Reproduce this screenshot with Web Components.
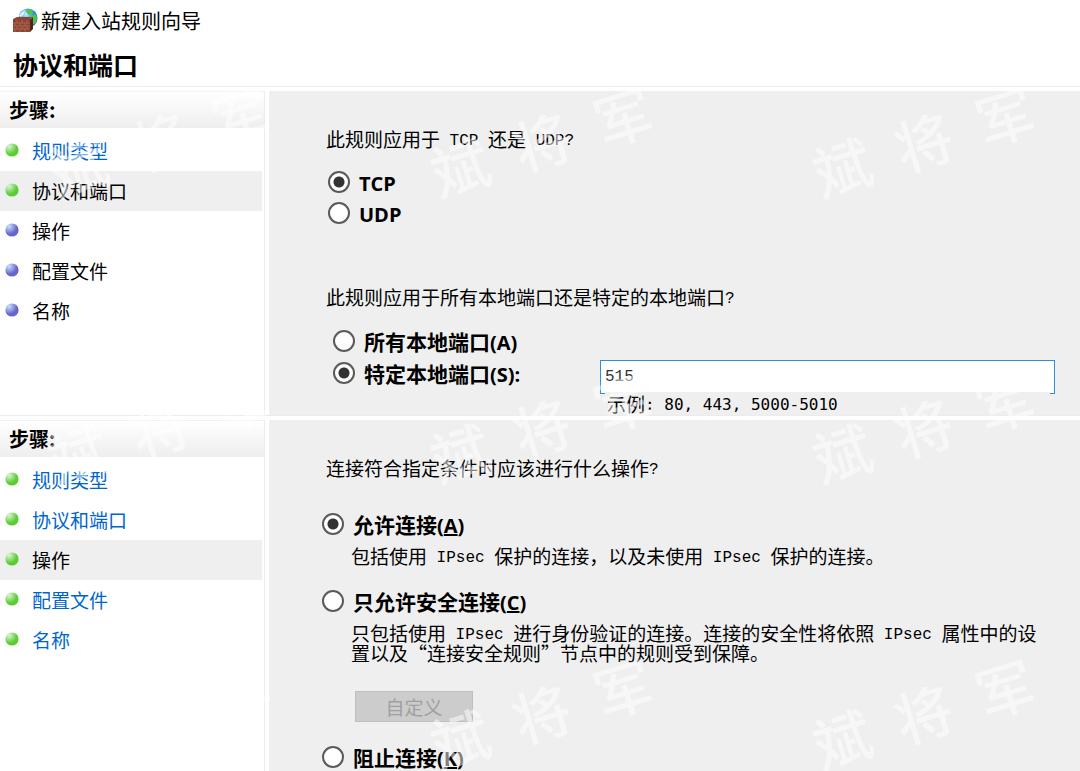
<!DOCTYPE html>
<html lang="zh-CN">
  <head>
    <meta charset="UTF-8" />
    <meta name="viewport" content="width=device-width, initial-scale=1" />
    <title>新建入站规则向导</title>
    <style>
      body {
        margin: 0;
        min-height: 100vh;
        display: flex;
        flex-direction: column;
        position: relative;
        overflow-x: hidden;
        background: #fff;
        color: #000;
        font: 19px/24px "Noto Sans CJK SC", sans-serif;
        --panel: #efefef;
        --link: #0066cc;
      }
      wizard-page:last-of-type {
        flex: 1;
      }
      p {
        margin: 0;
      }
      .protocols {
        gap: 3px;
        margin: 17px 0 58px 2px;
      }
      .ports {
        gap: 4px;
        margin: 18px 0 0 7px;
      }
      .actions {
        margin: 30px 0 0 -4px;
      }
    </style>
  </head>
  <body>
    <template id="tpl-header">
      <style>
        :host {
          display: block;
          padding: 7px 12px 4px;
        }
        .title {
          display: flex;
          align-items: center;
          gap: 2px;
          font-size: 20px;
          line-height: 28px;
        }
        svg {
          width: 27px;
          height: 26px;
        }
        h1 {
          margin: 12px 0 0 1px;
          font-size: 25px;
          line-height: 35px;
          font-weight: 700;
        }
      </style>
      <div class="title">
        <svg viewBox="0 0 27 26" aria-hidden="true">
          <defs>
            <radialGradient id="globe" cx=".4" cy=".3" r=".75">
              <stop offset="0" stop-color="#c4ecff" />
              <stop offset=".45" stop-color="#3f9fe0" />
              <stop offset="1" stop-color="#0c4bb0" />
            </radialGradient>
          </defs>
          <circle cx="16" cy="10" r="9.5" fill="url(#globe)" />
          <path d="M14 2q4-2 7 1l-1 3-3 1-2-2zM19 8l5-2q2 4 0 9l-4 2-2-4z" fill="#4fc34a" />
          <path d="M7 8q2-4 6-6l-1 4-3 3z" fill="#d9f6ff" />
          <path d="M1 11l4-2h15l-2 3v12H1z" fill="#8d4433" />
          <path d="M18 12l3-3v12l-3 3z" fill="#552218" />
          <path d="M1 15h17M1 18h17M1 21h17M5 12v3M10 12v3M15 12v3M3 15v3M8 15v3M13 15v3M5 18v3M10 18v3M15 18v3M3 21v3M8 21v3M13 21v3" stroke="#ba7764" stroke-width=".6" />
        </svg>
        <slot name="title"></slot>
      </div>
      <h1><slot></slot></h1>
    </template>

    <template id="tpl-page">
      <style>
        :host {
          display: grid;
          grid-template-columns: 265px minmax(0, 1fr);
          column-gap: 4px;
          border-top: 1px solid #ececec;
          padding-top: 4px;
        }
        nav {
          border-top: 1px solid #f2f2f2;
          border-right: 1px solid #ebebeb;
        }
        h2 {
          margin: 0 0 3px;
          padding: 0 9px;
          font-size: 20px;
          line-height: 36px;
          font-weight: 700;
          background: linear-gradient(#fff, #eee);
        }
        main {
          background: var(--panel);
          padding: 36px 25px 0 57px;
        }
      </style>
      <nav>
        <h2>步骤:</h2>
        <slot name="step"></slot>
      </nav>
      <main><slot></slot></main>
    </template>

    <template id="tpl-step">
      <style>
        :host {
          display: flex;
          align-items: center;
          gap: 13px;
          height: 40px;
          margin-right: 2px;
          padding-left: 5px;
        }
        :host([current]) {
          background: var(--panel);
        }
        svg {
          width: 14px;
          height: 14px;
          padding-bottom: 3px;
        }
        a {
          color: var(--link);
          text-decoration: none;
        }
      </style>
      <svg viewBox="0 0 14 14" aria-hidden="true">
        <defs>
          <radialGradient id="ball" cx=".28" cy=".22" r=".6">
            <stop class="light" offset="0" />
            <stop class="base" offset="1" />
          </radialGradient>
        </defs>
        <circle cx="7" cy="7" r="6.6" fill="url(#ball)" />
      </svg>
    </template>

    <template id="tpl-radio">
      <style>
        :host {
          display: block;
          font-size: 21px;
          line-height: 28px;
          font-weight: 700;
        }
        label {
          display: flex;
          align-items: center;
          gap: 9px;
          width: fit-content;
          height: 28px;
        }
        input {
          appearance: none;
          flex: none;
          width: 22px;
          height: 22px;
          margin: 0;
          border: 2px solid #5a5a5a;
          border-radius: 50%;
          background: #fff;
        }
        input:checked {
          background: radial-gradient(circle, #333 5px, #fff 6px);
        }
      </style>
      <label><input type="radio" /><span><slot></slot></span></label>
    </template>

    <!-- inline element: no white space around the slot, it would be drawn -->
    <template id="tpl-ascii"><style>
        :host {
          font-family: "Liberation Mono", monospace;
          font-size: 16px;
          line-height: 1;
          vertical-align: 2px;
          white-space: pre-wrap;
        }
        :host([bold]) {
          font-family: "Open Sans", sans-serif;
          font-size: 20px;
          vertical-align: baseline;
        }
        :host([sans]) {
          font-family: "DejaVu Sans Mono", monospace;
        }
      </style><slot></slot></template>

    <template id="tpl-stack">
      <style>
        :host {
          display: flex;
          flex-direction: column;
        }
      </style>
      <slot></slot>
    </template>

    <template id="tpl-port">
      <style>
        :host {
          display: grid;
          grid-template-columns: 267px minmax(0, 1fr);
        }
        .field {
          padding-top: 1px;
        }
        input {
          display: block;
          box-sizing: border-box;
          width: 100%;
          height: 34px;
          border: 1px solid #2f8fdd;
          padding: 0 4px;
          background: #fff;
          color: #333;
          font: 16px "Liberation Mono", monospace;
          outline: none;
        }
        .hint {
          position: relative;
          margin: -2px 5px 0;
          padding-left: 2px;
          line-height: 23px;
          background: var(--panel);
        }
      </style>
      <slot name="option"></slot>
      <div class="field">
        <input type="text" aria-label="特定本地端口" />
        <div class="hint"><slot></slot></div>
      </div>
    </template>

    <template id="tpl-action">
      <style>
        :host {
          display: block;
          margin-bottom: 21px;
        }
        .text {
          padding: 8px 7px 0 29px;
          line-height: 20px;
        }
      </style>
      <slot name="option"></slot>
      <div class="text"><slot></slot></div>
    </template>

    <template id="tpl-button">
      <style>
        :host {
          display: block;
          margin: 28px 0 0 4px;
        }
        button {
          display: block;
          width: 118px;
          height: 31px;
          padding: 0;
          border: 1px solid #bfbfbf;
          background: #ccc;
          color: #a0a0a0;
          font: inherit;
        }
      </style>
      <button type="button" disabled><slot></slot></button>
    </template>

    <template id="tpl-mark">
      <style>
        :host {
          position: absolute;
          inset: 0;
          overflow: hidden;
          pointer-events: none;
          color: rgba(255, 255, 255, 0.5);
          font-size: 58px;
          font-weight: 500;
          line-height: 60px;
        }
        div {
          position: absolute;
          display: flex;
          gap: 27px;
          transform: rotate(-17deg);
        }
      </style>
    </template>

    <script>
      class BaseElement extends HTMLElement {
        constructor(id) {
          super();
          const plantilla = document.getElementById(id);
          this.attachShadow({ mode: "open" });
          this.shadowRoot.append(plantilla.content.cloneNode(true));
        }
      }

      class StepItem extends BaseElement {
        constructor() {
          super("tpl-step");
        }

        connectedCallback() {
          const todo = this.hasAttribute("todo");
          const root = this.shadowRoot;
          root.querySelector(".light").setAttribute("stop-color", todo ? "#c5e2ff" : "#d8f6d8");
          root.querySelector(".base").setAttribute("stop-color", todo ? "#6864cc" : "#5ccc33");

          const text = document.createElement(this.hasAttribute("link") ? "a" : "span");
          if (text.localName === "a") text.href = "#";
          text.append(document.createElement("slot"));
          root.append(text);
        }
      }

      class RadioOption extends BaseElement {
        constructor() {
          super("tpl-radio");
        }

        connectedCallback() {
          const input = this.shadowRoot.querySelector("input");
          const group = this.getAttribute("group");
          input.name = group;
          input.checked = this.hasAttribute("checked");

          // radios in different shadow roots do not group by themselves
          input.addEventListener("change", () => {
            document.querySelectorAll(`radio-option[group="${group}"]`).forEach((other) => {
              other.shadowRoot.querySelector("input").checked = other === this;
            });
          });
        }
      }

      class PortField extends BaseElement {
        constructor() {
          super("tpl-port");
        }

        connectedCallback() {
          this.shadowRoot.querySelector("input").value = this.getAttribute("value");
        }
      }

      class WaterMark extends BaseElement {
        constructor() {
          super("tpl-mark");
        }

        connectedCallback() {
          this.setAttribute("aria-hidden", "true");
          for (let row = 0; row < 3; row++) {
            for (let col = 0; col < 3; col++) {
              const mark = document.createElement("div");
              mark.style.left = 45 + col * 382 + "px";
              mark.style.top = 110 + row * 286 + "px";
              for (const char of "斌将军") {
                const span = document.createElement("span");
                span.textContent = char;
                mark.append(span);
              }
              this.shadowRoot.append(mark);
            }
          }
        }
      }

      function define(name, id) {
        customElements.define(
          name,
          class extends BaseElement {
            constructor() {
              super(id);
            }
          }
        );
      }

      define("wizard-header", "tpl-header");
      define("wizard-page", "tpl-page");
      define("ascii-text", "tpl-ascii");
      define("option-stack", "tpl-stack");
      define("action-option", "tpl-action");
      define("custom-button", "tpl-button");
      customElements.define("step-item", StepItem);
      customElements.define("radio-option", RadioOption);
      customElements.define("port-field", PortField);
      customElements.define("water-mark", WaterMark);
    </script>

    <wizard-header><span slot="title">新建入站规则向导</span>协议和端口</wizard-header>

    <wizard-page>
      <step-item slot="step" link>规则类型</step-item>
      <step-item slot="step" current>协议和端口</step-item>
      <step-item slot="step" todo>操作</step-item>
      <step-item slot="step" todo>配置文件</step-item>
      <step-item slot="step" todo>名称</step-item>

      <p>此规则应用于<ascii-text> TCP </ascii-text>还是<ascii-text> UDP?</ascii-text></p>
      <option-stack class="protocols">
        <radio-option group="protocol" checked><ascii-text bold>TCP</ascii-text></radio-option>
        <radio-option group="protocol"><ascii-text bold>UDP</ascii-text></radio-option>
      </option-stack>
      <p>此规则应用于所有本地端口还是特定的本地端口<ascii-text>?</ascii-text></p>
      <option-stack class="ports">
        <radio-option group="ports">所有本地端口<ascii-text bold>(A)</ascii-text></radio-option>
        <port-field value="515">
          <radio-option slot="option" group="ports" checked>特定本地端口<ascii-text bold>(S):</ascii-text></radio-option>
          示例<ascii-text sans>: 80, 443, 5000-5010</ascii-text>
        </port-field>
      </option-stack>
    </wizard-page>

    <wizard-page>
      <step-item slot="step" link>规则类型</step-item>
      <step-item slot="step" link>协议和端口</step-item>
      <step-item slot="step" current>操作</step-item>
      <step-item slot="step" link>配置文件</step-item>
      <step-item slot="step" link>名称</step-item>

      <p>连接符合指定条件时应该进行什么操作<ascii-text>?</ascii-text></p>
      <option-stack class="actions">
        <action-option>
          <radio-option slot="option" group="action" checked>允许连接<ascii-text bold>(<u>A</u>)</ascii-text></radio-option>
          包括使用<ascii-text> IPsec </ascii-text>保护的连接，以及未使用<ascii-text> IPsec </ascii-text>保护的连接。
        </action-option>
        <action-option>
          <radio-option slot="option" group="action">只允许安全连接<ascii-text bold>(<u>C</u>)</ascii-text></radio-option>
          只包括使用<ascii-text> IPsec </ascii-text>进行身份验证的连接。连接的安全性将依照<ascii-text> IPsec </ascii-text>属性中的设置以及“连接安全规则”节点中的规则受到保障。
          <custom-button>自定义</custom-button>
        </action-option>
        <radio-option group="action">阻止连接<ascii-text bold>(<u>K</u>)</ascii-text></radio-option>
      </option-stack>
    </wizard-page>

    <water-mark></water-mark>
  </body>
</html>
